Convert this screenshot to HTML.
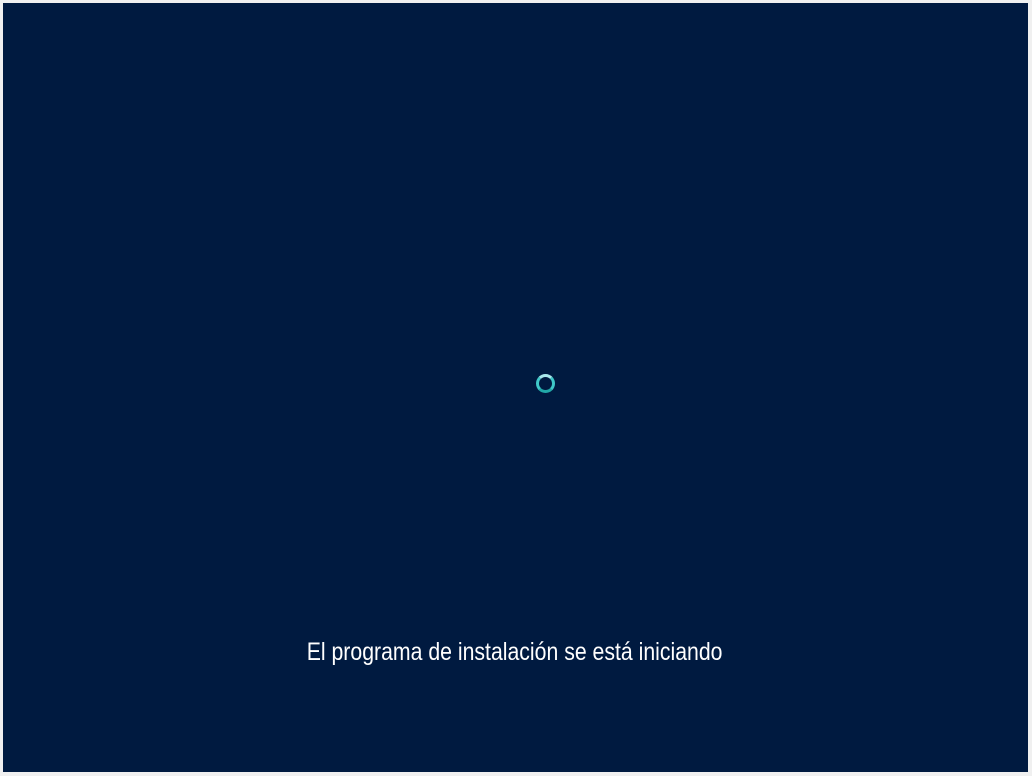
<!DOCTYPE html>
<html><head><meta charset="utf-8"><style>
html,body{margin:0;padding:0;width:1032px;height:776px;overflow:hidden;background:#f0f0f0}
.scr{position:absolute;left:3px;top:3px;width:1025px;height:769px;background:#001a40}
.sp{position:absolute;left:536px;top:374px;width:13px;height:13px;border-radius:50%;border:3px solid #3fc8c8;border-top-color:#a8e8ec;border-bottom-color:#22a8a8}
.t{position:absolute;left:0;width:1030px;top:636px;text-align:center;color:#fff;font-family:"Liberation Sans",sans-serif;font-size:25px;line-height:32px}
.t span{display:inline-block;transform:scaleX(0.85);transform-origin:center}
</style></head><body>
<div class="scr"></div>
<div class="sp"></div>
<div class="t"><span>El programa de instalación se está iniciando</span></div>
</body></html>
